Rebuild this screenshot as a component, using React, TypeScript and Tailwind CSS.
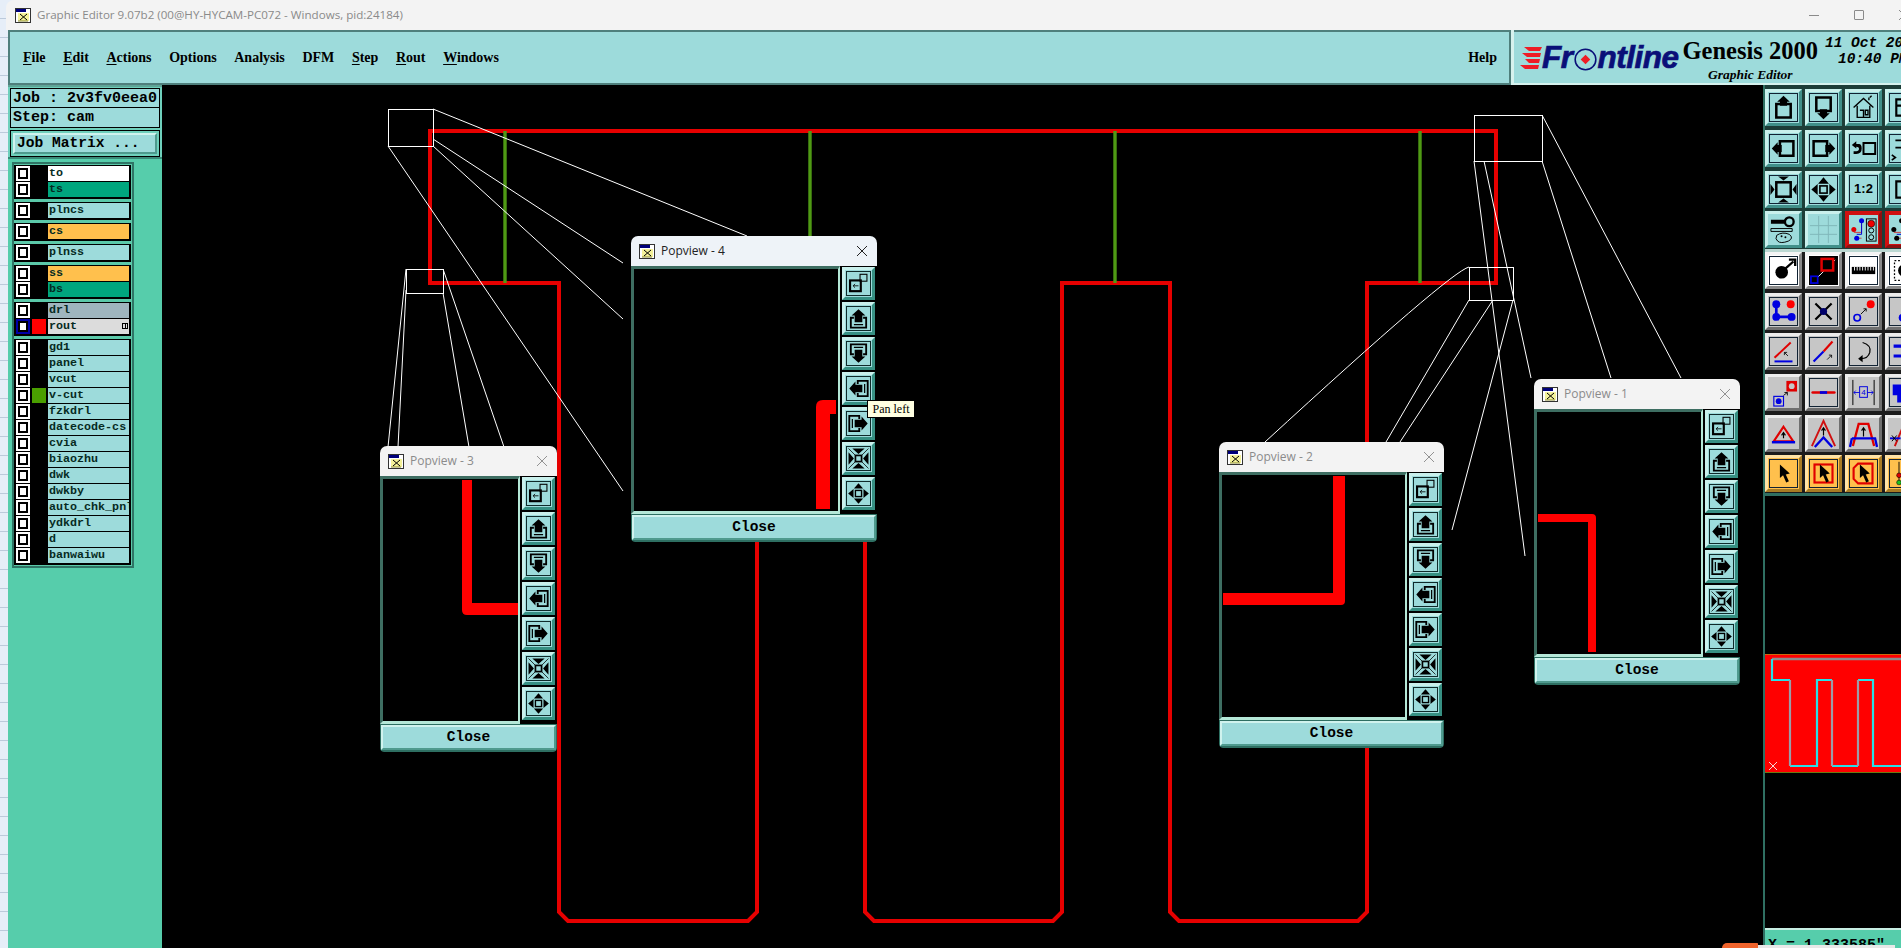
import type { ReactNode } from "react";

const mono = "[font-family:'Liberation_Mono',monospace]";
const serif = "[font-family:'Liberation_Serif',serif]";

type Layer = { name: string; bar: string; swatch?: string; picked?: boolean };

const layerGroups: Layer[][] = [
  [
    { name: "to", bar: "bg-white" },
    { name: "ts", bar: "bg-[#00a67e]" },
  ],
  [{ name: "plncs", bar: "bg-[#9ddbdb]" }],
  [{ name: "cs", bar: "bg-[#ffc04d]" }],
  [{ name: "plnss", bar: "bg-[#9ddbdb]" }],
  [
    { name: "ss", bar: "bg-[#ffc04d]" },
    { name: "bs", bar: "bg-[#00a67e]" },
  ],
  [
    { name: "drl", bar: "bg-[#9fb5be]" },
    { name: "rout", bar: "bg-[#dcdcdc]", swatch: "bg-[#ff0000]", picked: true },
  ],
  [
    { name: "gd1", bar: "bg-[#9ddbdb]" },
    { name: "panel", bar: "bg-[#9ddbdb]" },
    { name: "vcut", bar: "bg-[#9ddbdb]" },
    { name: "v-cut", bar: "bg-[#9ddbdb]", swatch: "bg-[#4a9f00]" },
    { name: "fzkdrl", bar: "bg-[#9ddbdb]" },
    { name: "datecode-cs", bar: "bg-[#9ddbdb]" },
    { name: "cvia", bar: "bg-[#9ddbdb]" },
    { name: "biaozhu", bar: "bg-[#9ddbdb]" },
    { name: "dwk", bar: "bg-[#9ddbdb]" },
    { name: "dwkby", bar: "bg-[#9ddbdb]" },
    { name: "auto_chk_pnl", bar: "bg-[#9ddbdb]" },
    { name: "ydkdrl", bar: "bg-[#9ddbdb]" },
    { name: "d", bar: "bg-[#9ddbdb]" },
    { name: "banwaiwu", bar: "bg-[#9ddbdb]" },
  ],
];

const tones = {
  teal: "bg-[#9ddbdb] border-t-[#c9f0ec] border-l-[#c9f0ec] border-b-[#41908a] border-r-[#41908a]",
  white: "bg-white border-t-[#f4f4f4] border-l-[#f4f4f4] border-b-[#8a8a8a] border-r-[#8a8a8a]",
  gray: "bg-[#c6c6c6] border-t-[#ececec] border-l-[#ececec] border-b-[#6f6f6f] border-r-[#6f6f6f]",
  orange: "bg-[#ffc04d] border-t-[#ffe3a6] border-l-[#ffe3a6] border-b-[#a87c24] border-r-[#a87c24]",
  red: "bg-[#d01010] border-t-[#d01010] border-l-[#d01010] border-b-[#8a1010] border-r-[#8a1010]",
};

function Tool({ tone, bare, children }: { tone: keyof typeof tones; bare?: boolean; children?: ReactNode }) {
  return (
    <div className={`h-[37px] w-[37px] border-[3px] p-[1px] ${tones[tone]}`}>
      <div className={`h-full w-full ${bare ? "" : "border border-[#123]"} ${tone === "red" ? "bg-[#9ddbdb]" : ""}`}>{children}</div>
    </div>
  );
}

function Ico({ children }: { children: ReactNode }) {
  return (
    <svg viewBox="0 0 30 30" className="block h-full w-full">
      {children}
    </svg>
  );
}

// pan icon for the tool panel, drawn pointing up and turned for the other three
function Pan({ rotate = 0 }: { rotate?: number }) {
  return (
    <Ico>
      <g transform={`rotate(${rotate} 15 15)`}>
        <path d="M7 11 H23 V26 H7 Z" fill="none" stroke="#000" strokeWidth="2.8" />
        <path d="M15 2 L22 8.5 H19 V13 H11 V8.5 H8 Z" fill="#000" />
      </g>
    </Ico>
  );
}

// same idea with the double frame the popview buttons have
function PopPan({ rotate = 0 }: { rotate?: number }) {
  return (
    <Ico>
      <g transform={`rotate(${rotate} 15 15)`}>
        <path d="M9 14 H5 V27 H25 V14 H21" fill="none" stroke="#000" strokeWidth="2.4" />
        <path d="M9 23 H21" stroke="#000" strokeWidth="1.6" />
        <path d="M15 3 L24 11 H20 V20 H10 V11 H6 Z" fill="#000" />
      </g>
    </Ico>
  );
}

function FitIcon() {
  return (
    <Ico>
      <rect x="7" y="7" width="16" height="16" fill="none" stroke="#000" strokeWidth="2.8" />
      <path d="M15 5 L9 0.5 H21 Z M15 25 L9 29.5 H21 Z M5 15 L0.5 9 V21 Z M25 15 L29.5 9 V21 Z" fill="#000" />
    </Ico>
  );
}

function PopFit() {
  return (
    <Ico>
      <path d="M2 2 L28 28 M28 2 L2 28" stroke="#000" strokeWidth="1" />
      <rect x="11" y="11" width="8" height="8" fill="#9ddbdb" stroke="#000" strokeWidth="2.2" />
      <path d="M15 9 L7 2 H23 Z M15 21 L7 28 H23 Z M9 15 L2 7 V23 Z M21 15 L28 7 V23 Z" fill="#000" />
    </Ico>
  );
}

function OutIcon() {
  return (
    <Ico>
      <rect x="11" y="11" width="8" height="8" fill="none" stroke="#000" strokeWidth="1.8" />
      <path d="M15 1.5 L9 8.5 H21 Z M15 28.5 L9 21.5 H21 Z M1.5 15 L8.5 9 V21 Z M28.5 15 L21.5 9 V21 Z" fill="#000" />
    </Ico>
  );
}

function Snap({ wide }: { wide?: boolean }) {
  return (
    <Ico>
      <path d="M5 18 H13 V8 M13 24 H6" fill="none" stroke="#d03030" strokeWidth="0.9" />
      <path d="M13 6 V20 H8" fill="none" stroke="#0000d0" strokeWidth="1" />
      <circle cx="13" cy="6" r="2.6" fill={wide ? "#000" : "#0000e0"} />
      <circle cx="5" cy="15" r="2.6" fill={wide ? "#000" : "#e00000"} />
      <circle cx="8" cy="24" r="2.6" fill={wide ? "#000" : "#0000e0"} />
      <rect x="18" y="4" width="10" height="23" fill="none" stroke="#000" strokeWidth="1" />
      <circle cx="23" cy="9" r="3.6" fill="#f00000" stroke="#000" strokeWidth="0.6" />
      <circle cx="23" cy="16" r="2.6" fill="none" stroke="#000" />
      <circle cx="23" cy="23" r="2.6" fill="none" stroke="#000" />
    </Ico>
  );
}

function Cursor() {
  return <path d="M11 5 L11 20 L14.5 17 L18 25 L21 23.5 L17.5 16 L22 15 Z" fill="#000" />;
}

const panelTop: ReactNode[] = [
  <Tool tone="teal" key="a1"><Pan /></Tool>,
  <Tool tone="teal" key="a2"><Pan rotate={180} /></Tool>,
  <Tool tone="teal" key="a3">
    <Ico>
      <path d="M4 15 L15 5 L26 15 M8 13 V26 H22 V13 M11 18 H15 V26 M17 18 H20 V23 H17 Z M21 7 V4 M22 4 L24 2" fill="none" stroke="#000" strokeWidth="1.5" />
    </Ico>
  </Tool>,
  <Tool tone="teal" key="a4">
    <Ico><path d="M7 6 H25 V24 H7 Z M7 13 H18" fill="none" stroke="#000" strokeWidth="2.4" /></Ico>
  </Tool>,
  <Tool tone="teal" key="b1"><Pan rotate={270} /></Tool>,
  <Tool tone="teal" key="b2"><Pan rotate={90} /></Tool>,
  <Tool tone="teal" key="b3">
    <Ico>
      <path d="M15 9 H28 V21 H15 Z" fill="none" stroke="#000" strokeWidth="2.2" />
      <path d="M2 11 L7 7 V10 H10 Q13 10 13 15 Q13 21 7 21 H4 V18 H7 Q10 18 10 15 Q10 13 7 13 V15 Z" fill="#000" />
    </Ico>
  </Tool>,
  <Tool tone="teal" key="b4">
    <Ico><path d="M6 6 H24 V14 H6 M2 22 L6 25 L2 28" fill="none" stroke="#000" strokeWidth="1.8" /></Ico>
  </Tool>,
  <Tool tone="teal" key="c1"><FitIcon /></Tool>,
  <Tool tone="teal" key="c2"><OutIcon /></Tool>,
  <Tool tone="teal" key="c3">
    <div className="flex h-full items-center justify-center text-[13px] font-bold text-black [font-family:'Liberation_Sans',sans-serif]">1:2</div>
  </Tool>,
  <Tool tone="teal" key="c4">
    <Ico><path d="M7 6 H25 V24 H7 Z" fill="none" stroke="#000" strokeWidth="2.4" /></Ico>
  </Tool>,
  <Tool tone="teal" key="d1" bare>
    <Ico>
      <path d="M2 6 H17 M2 8 H17" stroke="#000" strokeWidth="2" />
      <circle cx="21" cy="7" r="4.5" fill="none" stroke="#000" strokeWidth="2.4" />
      <path d="M2 14 H24 V17 H2 Z" fill="none" stroke="#000" strokeWidth="1" />
      <path d="M8 21 Q14 17 21 20 Q26 24 20 27 Q12 30 9 27 Q6 25 8 21 Z" fill="none" stroke="#000" strokeWidth="1" />
      <circle cx="13" cy="22" r="1" fill="#000" />
      <circle cx="17" cy="23" r="1" fill="#000" />
    </Ico>
  </Tool>,
  <Tool tone="teal" key="d2" bare>
    <Ico><path d="M1 11 H29 M1 20 H29 M10 1 V29 M20 1 V29" stroke="#7fb6b8" strokeWidth="1" /></Ico>
  </Tool>,
  <Tool tone="red" key="d3" bare><Snap /></Tool>,
  <Tool tone="red" key="d4" bare><Snap wide /></Tool>,
];

const panelBottom: ReactNode[] = [
  <Tool tone="white" key="e1">
    <Ico>
      <circle cx="13" cy="17" r="7" fill="#000" />
      <path d="M17 13 L26 5 M21 3 H28 V10" fill="none" stroke="#000" strokeWidth="2.6" />
    </Ico>
  </Tool>,
  <Tool tone="white" key="e2" bare>
    <Ico>
      <rect width="30" height="30" fill="#000" />
      <path d="M3 28 L27 4" stroke="#fff" strokeWidth="1" />
      <rect x="13" y="3" width="12" height="12" fill="#000" stroke="#e00000" strokeWidth="2.6" />
      <rect x="2" y="21" width="7" height="7" fill="#000" stroke="#0000e0" strokeWidth="1.8" />
    </Ico>
  </Tool>,
  <Tool tone="white" key="e3">
    <Ico>
      <path d="M2 11 H28 V19 H2 Z" fill="#000" />
      <path d="M5 11 V15 M8 11 V15 M11 11 V15 M14 11 V15 M17 11 V15 M20 11 V15 M23 11 V15 M26 11 V15" stroke="#fff" strokeWidth="1" />
    </Ico>
  </Tool>,
  <Tool tone="white" key="e4">
    <Ico>
      <rect x="5" y="4" width="18" height="22" fill="none" stroke="#000" strokeWidth="1.4" strokeDasharray="2 2" />
      <circle cx="16" cy="15" r="7" fill="#000" />
    </Ico>
  </Tool>,
  <Tool tone="gray" key="f1">
    <Ico>
      <path d="M7 6 V21 H24" fill="none" stroke="#0000e0" strokeWidth="3" />
      <circle cx="7" cy="7" r="4.4" fill="#0000e0" />
      <circle cx="7" cy="21" r="4.4" fill="#0000e0" />
      <circle cx="24" cy="21" r="4.4" fill="#0000e0" />
      <circle cx="23" cy="7" r="4.4" fill="#ff0000" />
    </Ico>
  </Tool>,
  <Tool tone="gray" key="f2">
    <Ico>
      <path d="M6 6 L24 24 M24 6 L6 24" stroke="#000" strokeWidth="2.4" />
      <circle cx="15" cy="15" r="4" fill="#00006a" />
    </Ico>
  </Tool>,
  <Tool tone="gray" key="f3">
    <Ico>
      <circle cx="8" cy="22" r="3.6" fill="none" stroke="#0000e0" strokeWidth="1.8" />
      <circle cx="23" cy="7" r="4.4" fill="#ff0000" />
      <path d="M12 18 L18 12 M15 12 H18 V15" fill="none" stroke="#000" strokeWidth="1" />
    </Ico>
  </Tool>,
  <Tool tone="gray" key="f4">
    <Ico><circle cx="14" cy="22" r="4.4" fill="#0000e0" /></Ico>
  </Tool>,
  <Tool tone="gray" key="g1">
    <Ico>
      <path d="M5 22 L23 5" stroke="#e00000" strokeWidth="2.2" />
      <path d="M5 26 H25" stroke="#0000e0" strokeWidth="2.2" />
      <path d="M20 20 L16 16 M16 19 V16 H19" fill="none" stroke="#000" strokeWidth="0.9" />
    </Ico>
  </Tool>,
  <Tool tone="gray" key="g2">
    <Ico>
      <path d="M15 15 L25 4" stroke="#e00000" strokeWidth="2.4" />
      <path d="M4 26 L15 15" stroke="#0000e0" strokeWidth="2.4" />
      <path d="M19 24 L24 19 M21 19 H24 V22" fill="none" stroke="#000" strokeWidth="0.9" />
    </Ico>
  </Tool>,
  <Tool tone="gray" key="g3">
    <Ico>
      <path d="M14 5 Q24 8 22 16 Q20 23 12 23" fill="none" stroke="#000" strokeWidth="1.4" />
      <path d="M9 23 L14 19 V27 Z" fill="#000" />
    </Ico>
  </Tool>,
  <Tool tone="gray" key="g4">
    <Ico><path d="M4 9 H26 M4 20 H26" stroke="#0000e0" strokeWidth="3.4" /></Ico>
  </Tool>,
  <Tool tone="gray" key="h1" bare>
    <Ico>
      <rect x="5" y="19" width="10" height="10" fill="none" stroke="#0000e0" strokeWidth="1.2" />
      <circle cx="10" cy="24" r="3" fill="#0000e0" />
      <rect x="18" y="3" width="11" height="11" fill="#e00000" />
      <circle cx="23.5" cy="8.5" r="3" fill="#c6c6c6" />
      <path d="M15 18 L19 15 M16 15 H19 V18" fill="none" stroke="#000" strokeWidth="0.9" />
    </Ico>
  </Tool>,
  <Tool tone="gray" key="h2">
    <Ico>
      <path d="M3 15 H27" stroke="#e00000" strokeWidth="3" strokeLinecap="round" />
      <path d="M11 15 H19" stroke="#0000e0" strokeWidth="3" />
    </Ico>
  </Tool>,
  <Tool tone="gray" key="h3" bare>
    <Ico>
      <path d="M4 2 V28 M26 2 V28" stroke="#000" strokeWidth="1" />
      <rect x="11" y="9" width="8" height="11" fill="none" stroke="#0000e0" strokeWidth="1" />
      <path d="M5 15 H11 M19 15 H25 M7 13 L5 15 L7 17 M23 13 L25 15 L23 17" fill="none" stroke="#0000e0" strokeWidth="0.9" />
      <text x="15" y="18" textAnchor="middle" fontSize="8" fill="#0000e0">4</text>
    </Ico>
  </Tool>,
  <Tool tone="gray" key="h4">
    <Ico><path d="M3 6 H20 V18 H14 V26 H8 V18 H3 Z" fill="#0000e0" /></Ico>
  </Tool>,
  <Tool tone="gray" key="i1" bare>
    <Ico>
      <path d="M15 8 L25 23 H5 Z" fill="none" stroke="#e00000" strokeWidth="2.2" />
      <path d="M3 24 H27" stroke="#0000e0" strokeWidth="2.6" />
      <path d="M15 20 V15 M13 17 L15 14 L17 17" fill="none" stroke="#000" strokeWidth="1.2" />
    </Ico>
  </Tool>,
  <Tool tone="gray" key="i2" bare>
    <Ico>
      <path d="M3 28 L15 2 L27 28" fill="none" stroke="#d01010" strokeWidth="2" />
      <path d="M6 29 L15 19 L24 29" fill="none" stroke="#0000e0" strokeWidth="2.4" />
      <path d="M15 17 V10 M13 12 L15 9 L17 12" fill="none" stroke="#000" strokeWidth="1.2" />
    </Ico>
  </Tool>,
  <Tool tone="gray" key="i3" bare>
    <Ico>
      <path d="M4 28 L10 5 H20 L26 28" fill="none" stroke="#e00000" strokeWidth="2.4" />
      <path d="M3 20 H27 L29 29 M3 20 L1 29" fill="none" stroke="#0000e0" strokeWidth="2.4" />
      <path d="M15 18 V10 M13 12 L15 9 L17 12" fill="none" stroke="#000" strokeWidth="1.2" />
    </Ico>
  </Tool>,
  <Tool tone="gray" key="i4" bare>
    <Ico>
      <path d="M6 28 L16 4" stroke="#d01010" strokeWidth="2" />
      <path d="M1 20 H12" stroke="#0000e0" strokeWidth="2" />
      <path d="M3 17 L8 23 M8 17 L3 23" stroke="#000" strokeWidth="1" />
    </Ico>
  </Tool>,
  <Tool tone="orange" key="j1"><Ico><Cursor /></Ico></Tool>,
  <Tool tone="orange" key="j2">
    <Ico>
      <rect x="5" y="5" width="20" height="20" fill="none" stroke="#e00000" strokeWidth="2.4" />
      <Cursor />
    </Ico>
  </Tool>,
  <Tool tone="orange" key="j3">
    <Ico>
      <path d="M9 4 H25 V26 H9 L4 21 V9 Z" fill="none" stroke="#e00000" strokeWidth="2.4" />
      <Cursor />
    </Ico>
  </Tool>,
  <Tool tone="orange" key="j4">
    <Ico>
      <path d="M10 2 V24" stroke="#000" strokeWidth="1" />
      <circle cx="10" cy="17" r="2.6" fill="#e00000" stroke="#000" strokeWidth="0.6" />
      <circle cx="10" cy="25" r="2.6" fill="#20c020" stroke="#000" strokeWidth="0.6" />
    </Ico>
  </Tool>,
];

function WinIcon() {
  return (
    <svg viewBox="0 0 16 15" className="h-[15px] w-[16px] shrink-0">
      <rect x="0.5" y="0.5" width="15" height="14" fill="#fff" stroke="#333" />
      <rect x="1" y="1" width="10" height="3" fill="#00007a" />
      <rect x="3" y="5" width="11" height="8" fill="#f4f29a" />
      <path d="M5 6 L12 12 M12 6 L5 12" stroke="#000" strokeWidth="1" />
      <path d="M3 13 H13" stroke="#8a8a30" strokeWidth="1" />
    </svg>
  );
}

function PopButton({ children }: { children: ReactNode }) {
  return (
    <div className="h-[33px] w-[33px] border-[3px] border-t-[#c9f0ec] border-l-[#c9f0ec] border-b-[#379083] border-r-[#379083] bg-[#9ddbdb] p-[1px]">
      <div className="h-full w-full border border-[#0f2a2a]">{children}</div>
    </div>
  );
}

function Popview({ title, place, active, trace }: { title: string; place: string; active?: boolean; trace: string }) {
  return (
    <div className={`absolute flex h-[306px] flex-col overflow-hidden rounded-t-[7px] rounded-b-[4px] bg-black ${place}`}>
      <div className={`flex h-[30px] shrink-0 items-center pl-2 pr-[9px] ${active ? "bg-[#eef3f8]" : "bg-[#f3f3f3]"}`}>
        <WinIcon />
        <span className={`ml-[6px] flex-1 text-[12px] [font-family:'Open_Sans',sans-serif] ${active ? "text-[#222]" : "text-[#8b8b8b]"}`}>
          {title}
        </span>
        <svg viewBox="0 0 12 12" className="h-[12px] w-[12px]">
          <path d="M1 1 L11 11 M11 1 L1 11" stroke={active ? "#222" : "#929292"} strokeWidth="1" />
        </svg>
      </div>
      <div className="flex min-h-0 flex-1">
        <div className="relative min-w-0 flex-1 border-[3px] border-r-2 border-t-[#3e6e62] border-l-[#3e6e62] border-r-[#b5e8d8] border-b-[#b5e8d8] bg-black">
          <svg className="absolute inset-0 h-full w-full">
            <path d={trace} fill="#ff0000" />
          </svg>
        </div>
        <div className="flex w-[37px] shrink-0 flex-col gap-[2px] pl-[2px] pt-[1px]">
          <PopButton>
            <Ico>
              <rect x="4" y="11" width="14" height="14" fill="none" stroke="#000" strokeWidth="2.8" />
              <rect x="17" y="3" width="9" height="9" fill="none" stroke="#000" strokeWidth="1.4" />
              <path d="M15 18 H8 M10.5 15.5 L8 18 L10.5 20.5" fill="none" stroke="#000" strokeWidth="1.1" />
            </Ico>
          </PopButton>
          <PopButton><PopPan /></PopButton>
          <PopButton><PopPan rotate={180} /></PopButton>
          <PopButton><PopPan rotate={270} /></PopButton>
          <PopButton><PopPan rotate={90} /></PopButton>
          <PopButton><PopFit /></PopButton>
          <PopButton><OutIcon /></PopButton>
        </div>
      </div>
      <div className="h-[28px] shrink-0 rounded-b-[4px] bg-[#2e6f62] p-[1px] pb-[2px]">
        <div className={`flex h-full items-center justify-center border-2 border-t-[#d0f3ee] border-l-[#d0f3ee] border-b-[#4f9a8e] border-r-[#4f9a8e] bg-[#9ddbdb] pt-[1px] text-[14.5px] font-bold text-black ${mono}`}>
          Close
        </div>
      </div>
    </div>
  );
}

function MenuItem({ label, mark }: { label: string; mark?: boolean }) {
  return (
    <span>
      {mark ? <span className="underline underline-offset-2">{label[0]}</span> : label[0]}
      {label.slice(1)}
    </span>
  );
}

function Brand() {
  return (
    <div className="relative flex flex-1 items-center overflow-hidden border-y-2 border-t-[#4f7f7c] border-b-[#d6f2ee] bg-[#9ddbdb] pl-[6px] whitespace-nowrap">
      <svg viewBox="0 0 22 24" className="h-[24px] w-[22px] shrink-0">
        <path d="M4 1 H22 L20 5 H9 Z M2 7 H21 L20 11 H7 Z M5 13 H20 L19 17 H9 Z M0 19 H19 L18 23 H5 Z" fill="#ee1c25" />
      </svg>
      <div className="flex items-center text-[31.5px] leading-none font-bold tracking-[-0.5px] text-[#0a0f78] italic [font-family:'Liberation_Sans',sans-serif] [-webkit-text-stroke:0.7px_#0a0f78]">
        <span>Fr</span>
        <svg viewBox="0 0 24 24" className="mx-[1px] mt-[4px] h-[23px] w-[23px]">
          <circle cx="12" cy="12" r="10.8" fill="none" stroke="#0a0f78" strokeWidth="1.6" />
          <path d="M12 7 L17 12 L12 17 L7 12 Z" fill="#ee1c25" />
        </svg>
        <span>ntline</span>
      </div>
      <div className={`ml-[4px] flex w-[140px] flex-col items-center self-start pt-[3px] text-black ${serif}`}>
        <span className="text-[24.5px] leading-[31px] font-bold">Genesis 2000</span>
        <span className="text-[13.5px] leading-[17px] font-bold italic">Graphic Editor</span>
      </div>
      <div className={`ml-[7px] flex flex-col self-start pt-[3px] text-[14.5px] leading-[16px] font-bold text-black italic ${mono}`}>
        <span>11 Oct 2021</span>
        <span className="pl-[13px]">10:40 PM</span>
      </div>
    </div>
  );
}

function LeftPanel() {
  return (
    <div className="flex w-[154px] shrink-0 flex-col bg-[#56cdab]">
      <div className={`mb-[1px] shrink-0 border-y-2 border-t-[#5fa597] border-b-[#3a8a78] bg-[#6fd0bc] px-[2px] pt-[1px] text-black ${mono}`}>
        <div className="border border-black">
          <div className="h-[19px] border-b border-black bg-[#9ddbdb] pl-[2px] text-[15px] leading-[19px] font-bold whitespace-nowrap">Job : 2v3fv0eea0</div>
          <div className="h-[19px] bg-[#9ddbdb] pl-[2px] text-[15px] leading-[20px] font-bold">Step: cam</div>
        </div>
        <div className="mt-[2px] border border-black p-[2px]">
          <div className="h-[21px] border-2 border-t-[#d0f3ee] border-l-[#d0f3ee] border-b-[#4f9a8e] border-r-[#4f9a8e] bg-[#9ddbdb] pl-[2px] text-[14.6px] leading-[17px] font-bold">
            Job Matrix ...
          </div>
        </div>
      </div>
      <div className="flex flex-1 items-start">
        <div className="mt-[2px] ml-[4px] w-[122px] border-2 border-[#2f7465] bg-[#5bc9a9] py-[1px] pr-[1px]">
          <div className="flex flex-col gap-[3px]">
            {layerGroups.map((group, i) => (
              <div key={i} className="bg-black px-[2px] py-[1px]">
                {group.map((layer) => (
                  <div key={layer.name} className={`flex h-4 items-start gap-[2px] ${mono}`}>
                    <div className={`h-[15px] w-[14px] shrink-0 p-[2px] ${layer.picked ? "bg-[#0000a8]" : "bg-white"}`}>
                      <div className="h-full w-full border-2 border-black bg-white" />
                    </div>
                    <div className={`h-[15px] w-[14px] shrink-0 ${layer.swatch ?? "bg-black"}`} />
                    <div className={`relative h-[15px] min-w-0 flex-1 overflow-hidden pl-[1px] text-[11.7px] leading-[14px] font-bold whitespace-nowrap text-[#062a22] ${layer.bar}`}>
                      {layer.name}
                      {layer.picked && (
                        <div className="absolute top-[4px] right-[1px] h-[6px] w-[6px] border border-black bg-[linear-gradient(#000,#000)] bg-[length:1px_100%] bg-center bg-no-repeat" />
                      )}
                    </div>
                  </div>
                ))}
              </div>
            ))}
          </div>
        </div>
      </div>
    </div>
  );
}

function Canvas() {
  return (
    <div className="relative w-[1601px] shrink-0 overflow-hidden bg-black">
      <svg width="1601" height="863" viewBox="162 85 1601 863" className="block">
        <path
          d="M430 131 H1496 V283 H1367 V912 L1358 921 H1179 L1170 912 V283 H1062 V912 L1053 921 H874 L865 912 V283 H757 V912 L748 921 H568 L559 912 V283 H430 Z"
          fill="none"
          stroke="#e60000"
          strokeWidth="4"
        />
        <path d="M505 131 V283 M810 131 V283 M1115 131 V283 M1420 131 V283" stroke="#4f9a14" strokeWidth="3.4" />
        <g fill="none" stroke="#fff" strokeWidth="1">
          <rect x="388.5" y="109.5" width="45" height="37" />
          <rect x="406.5" y="269.5" width="37" height="24" />
          <rect x="1474.5" y="115.5" width="68" height="46" />
          <rect x="1469.5" y="267.5" width="44" height="33" />
          <path d="M433 109 L747 236 M433 139 L623 263 M433 146 L623 319 M388 146 L623 491" />
          <path d="M406 269 L388 447 M406 290 L398 447 M443 293 L469 447 M443 269 L504 447" />
          <path d="M1542 115 L1681 378 M1542 161 L1611 378 M1474 161 L1525 556 M1484 161 L1531 378" />
          <path d="M1469 267 Q1450 272 1265 442 M1469 300 L1386 442 M1493 300 L1400 442 M1513 300 L1452 530" />
        </g>
      </svg>
      <Popview title="Popview - 3" place="left-[218px] top-[361px] w-[177px]" trace="M79 1 H89 V124 H135 V136 H84 Q79 136 79 131 Z" />
      <Popview title="Popview - 2" place="left-[1057px] top-[357px] w-[225px]" trace="M111 1 H123 V126 Q123 130 119 130 H1 V118 H111 Z" />
      <Popview title="Popview - 1" place="left-[1372px] top-[294px] w-[206px]" trace="M1 102 H55 Q59 102 59 106 V240 H51 V110 H1 Z" />
      <Popview title="Popview - 4" place="left-[469px] top-[151px] w-[246px]" active trace="M182 240 V138 Q182 131 189 131 H202 V145 H196 V240 Z" />
      <div className={`absolute top-[315px] left-[705px] h-[18px] w-[48px] border border-black bg-[#ffffe1] text-center text-[12px] leading-[16px] text-black ${serif}`}>
        Pan left
      </div>
    </div>
  );
}

function RightPanel() {
  return (
    <div className="flex w-[138px] shrink-0 flex-col overflow-hidden border-l-2 border-[#2f6f62] bg-black">
      <div className="grid h-[164px] shrink-0 grid-cols-[repeat(4,37px)] gap-[3px] bg-[#1d3d38] pt-[4px]">{panelTop}</div>
      <div className="h-[3px] shrink-0 bg-[#bcd8d2]" />
      <div className="grid h-[241px] shrink-0 grid-cols-[repeat(4,37px)] gap-[3px] bg-[#1b1b1b]">{panelBottom}</div>
      <div className="h-[3px] shrink-0 bg-[#2f6f62]" />
      <div className="flex-1 pt-[158px]">
        <svg viewBox="1765 653 136 119" className="block h-[119px] w-[136px] bg-[#ff0000]">
          <path d="M1765 653.5 H1901" stroke="#c96a10" strokeWidth="1" />
          <path d="M1765 771.5 H1901" stroke="#6c7a10" strokeWidth="1" />
          <path d="M1772 658 H1901" stroke="#8c8c8c" strokeWidth="2.4" />
          <path d="M1772 658 V679 H1790 M1790 765 H1817 V679 H1832 M1832 765 H1858 M1858 679 H1873 V765 H1901" fill="none" stroke="#28e0e8" strokeWidth="2.2" />
          <path d="M1790 679 V765 M1832 679 V765 M1858 679 V765" stroke="#9c9ca8" strokeWidth="2.2" />
          <path d="M1769 761 L1777 769 M1777 761 L1769 769" stroke="#f2d8d8" strokeWidth="1" />
        </svg>
      </div>
      <div className={`h-[20px] shrink-0 overflow-hidden border-t-2 border-[#c8efe4] bg-[#56cdab] pt-[7px] pl-[3px] text-[15px] leading-[18px] font-bold whitespace-nowrap text-black ${mono}`}>
        X = 1.333585"
      </div>
    </div>
  );
}

export default function App() {
  return (
    <div className="relative flex h-[948px] w-[1901px] overflow-hidden bg-[#e6eef8]">
      <div className="h-full w-[8px] shrink-0 bg-[repeating-linear-gradient(to_bottom,#e6eef8_0,#e6eef8_18px,#bccadb_18px,#bccadb_19px)]" />
      <div className="flex min-w-0 flex-1 flex-col">
        <div className="relative -ml-[2px] flex h-[30px] shrink-0 items-center rounded-tl-[8px] bg-[#f3f3f3] pl-[9px] text-[11.6px] text-[#8a8a8a] [font-family:'Open_Sans',sans-serif]">
          <WinIcon />
          <span className="ml-[6px]">Graphic Editor 9.07b2 (00@HY-HYCAM-PC072 - Windows, pid:24184)</span>
          <div className="ml-auto flex items-center gap-[35px]">
            <div className="h-px w-[10px] bg-[#8a8a8a]" />
            <div className="h-[10px] w-[10px] rounded-[1px] border border-[#8a8a8a]" />
            <svg viewBox="0 0 2 10" className="h-[10px] w-[2px]">
              <path d="M0 0 L2 2 M0 10 L2 8" stroke="#8a8a8a" strokeWidth="1" />
            </svg>
          </div>
        </div>
        <div className="flex h-[55px] shrink-0 gap-[3px] bg-[#d6f2ee]">
          <div className={`flex w-[1503px] shrink-0 items-center border-2 border-[#4f7f7c] bg-[#9ddbdb] pr-[12px] pl-[13px] text-[14px] font-bold text-black ${serif}`}>
            <div className="flex gap-[17.6px]">
              <MenuItem label="File" mark />
              <MenuItem label="Edit" mark />
              <MenuItem label="Actions" mark />
              <MenuItem label="Options" />
              <MenuItem label="Analysis" />
              <MenuItem label="DFM" />
              <MenuItem label="Step" mark />
              <MenuItem label="Rout" mark />
              <MenuItem label="Windows" mark />
            </div>
            <span className="ml-auto">Help</span>
          </div>
          <Brand />
        </div>
        <div className="flex min-h-0 flex-1">
          <LeftPanel />
          <Canvas />
          <RightPanel />
        </div>
      </div>
      <div className="absolute right-[6px] bottom-0 h-[3px] w-[140px] rounded-tl-[4px] bg-[#e8e8e8]" />
      <div className="absolute bottom-0 left-[1722px] h-[5px] w-[36px] rounded-tl-[12px] rounded-tr-[2px] bg-[#f0642c]" />
    </div>
  );
}
